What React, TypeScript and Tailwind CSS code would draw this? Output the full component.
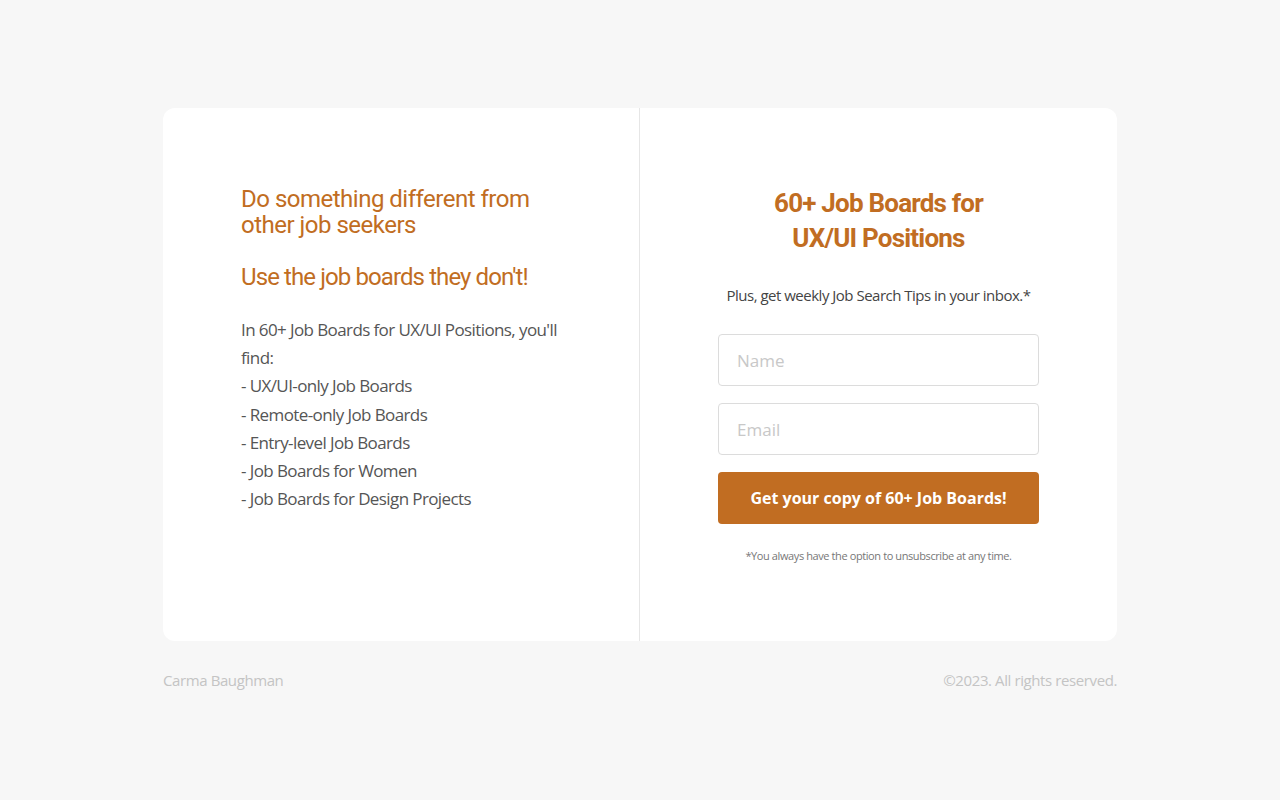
export default function App() {
  return (
    <div className="min-h-[800px] w-full bg-[#f7f7f7] pt-[108px]">
      <div className="mx-auto w-[954px]">
        {/* Card */}
        <div className="flex h-[533px] rounded-xl bg-white">
          {/* Left */}
          <div className="w-[477px] border-r border-[#e6e6e6] pl-[78px] pr-[60px] pt-[78px]">
            <h2 className="font-['Roboto',sans-serif] text-[24px] leading-[26px] tracking-[-0.5px] text-[#c16d22]">
              Do something different from other job seekers
            </h2>
            <h2 className="mt-[26px] font-['Roboto',sans-serif] text-[24px] leading-[26px] tracking-[-0.9px] text-[#c16d22]">
              Use the job boards they don't!
            </h2>
            <p className="mt-[26px] font-['Open_Sans',sans-serif] text-[17px] leading-[28.2px] tracking-[-0.6px] text-[#555]">
              In 60+ Job Boards for UX/UI Positions, you'll find:
              <br />- UX/UI-only Job Boards
              <br />- Remote-only Job Boards
              <br />- Entry-level Job Boards
              <br />- Job Boards for Women
              <br />- Job Boards for Design Projects
            </p>
          </div>

          {/* Right */}
          <div className="flex flex-1 flex-col items-center pt-[78px]">
            <h1 className="text-center font-['Roboto',sans-serif] text-[26px] font-bold leading-[35px] tracking-[-0.8px] text-[#c16d22]">
              60+ Job Boards for
              <br />
              UX/UI Positions
            </h1>
            <p className="mt-[28px] font-['Open_Sans',sans-serif] text-[15px] leading-[22px] tracking-[-0.5px] text-[#444]">
              Plus, get weekly Job Search Tips in your inbox.*
            </p>
            <form className="mt-[28px] flex w-[321px] flex-col gap-[17px]">
              <input
                type="text"
                placeholder="Name"
                className="h-[52px] w-full rounded border border-[#dcdcdc] bg-white px-[18px] font-['Open_Sans',sans-serif] text-[17px] text-[#555] placeholder:text-[#c8c8c8] focus:outline-none"
              />
              <input
                type="email"
                placeholder="Email"
                className="h-[52px] w-full rounded border border-[#dcdcdc] bg-white px-[18px] font-['Open_Sans',sans-serif] text-[17px] text-[#555] placeholder:text-[#c8c8c8] focus:outline-none"
              />
              <button
                type="button"
                className="h-[52px] w-full rounded bg-[#c16d22] font-['Open_Sans',sans-serif] text-[16px] font-bold text-white"
              >
                Get your copy of 60+ Job Boards!
              </button>
            </form>
            <p className="mt-[24px] font-['Open_Sans',sans-serif] text-[11px] tracking-[-0.4px] text-[#777]">
              *You always have the option to unsubscribe at any time.
            </p>
          </div>
        </div>

        {/* Footer */}
        <div className="mt-[28px] flex justify-between font-['Open_Sans',sans-serif] text-[15px] tracking-[-0.4px] text-[#c4c4c4]">
          <span>Carma Baughman</span>
          <span>©2023. All rights reserved.</span>
        </div>
      </div>
    </div>
  );
}
